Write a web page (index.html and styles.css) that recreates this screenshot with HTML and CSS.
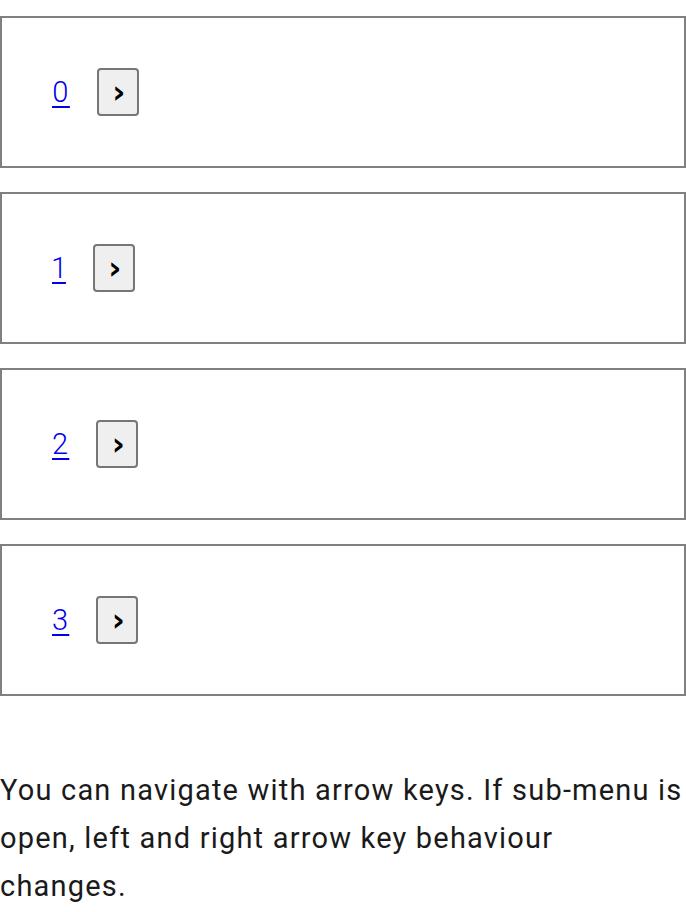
FILE: index.html
```html
<!DOCTYPE html>
<html lang="en">
<head>
<meta charset="utf-8">
<title>Menu</title>
<link rel="stylesheet" href="styles.css">
</head>
<body>
<ul class="menu">
  <li class="item"><a class="link" href="#">0</a><button class="toggle" type="button">›</button></li>
  <li class="item"><a class="link" href="#">1</a><button class="toggle" type="button">›</button></li>
  <li class="item"><a class="link" href="#">2</a><button class="toggle" type="button">›</button></li>
  <li class="item"><a class="link" href="#">3</a><button class="toggle" type="button">›</button></li>
</ul>
<p class="note">You can navigate with arrow keys. If sub-menu is open, left and right arrow key behaviour changes.</p>
</body>
</html>
```
FILE: styles.css
```css
html, body {
  margin: 0;
  padding: 0;
  background: #fff;
}
body {
  font-family: Roboto, "Liberation Sans", sans-serif;
  color: #1a1a1a;
}
.menu {
  list-style: none;
  margin: 16px 0 0;
  padding: 0;
  display: flex;
  flex-direction: column;
  gap: 24px;
}
.item {
  box-sizing: border-box;
  height: 152px;
  border: 2px solid #808080;
  display: flex;
  align-items: center;
  padding-left: 50px;
  gap: 27px;
}
.link {
  font-family: Roboto, "Liberation Sans", sans-serif;
  font-size: 29px;
  font-weight: 300;
  letter-spacing: 1.2px;
  font-variant-numeric: proportional-nums;
  color: #0000ee;
  text-decoration: underline;
  text-decoration-thickness: 2px;
  text-underline-offset: 4px;
}
.toggle {
  box-sizing: border-box;
  width: 42px;
  height: 48px;
  border: 2px solid #767676;
  border-radius: 4px;
  background: #efefef;
  color: #000;
  font-family: "DejaVu Sans", sans-serif;
  font-size: 32px;
  font-weight: bold;
  line-height: 1;
  padding: 0 0 0 2px;
  display: flex;
  align-items: center;
  justify-content: center;
}
.note {
  margin: 70px 0 0;
  font-size: 29px;
  letter-spacing: 1.2px;
  line-height: 48px;
}
```
